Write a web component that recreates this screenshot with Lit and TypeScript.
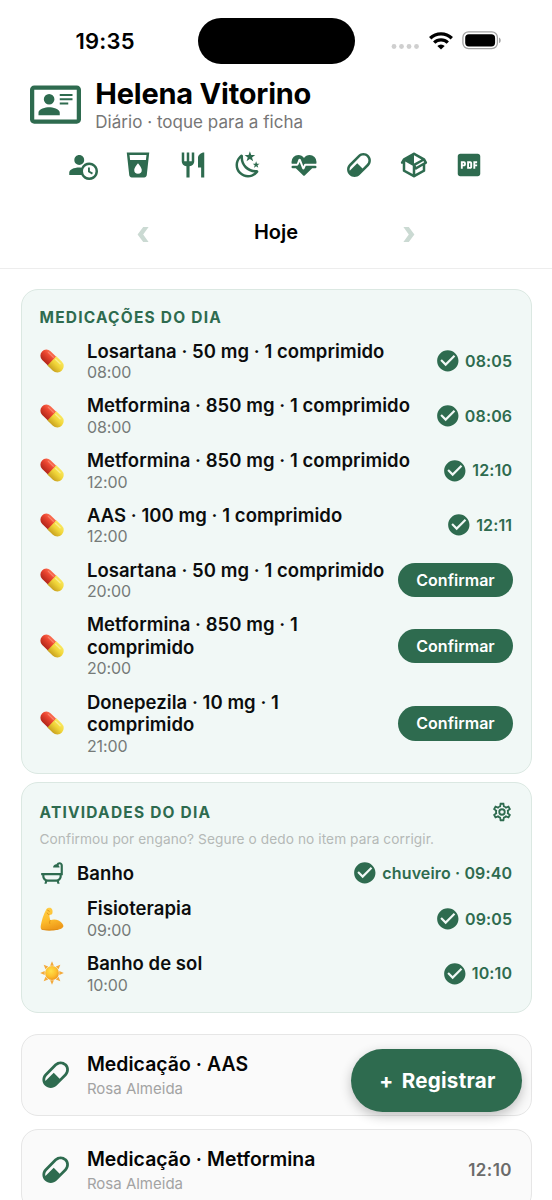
import { LitElement, html, svg, css, TemplateResult } from "lit";
import { customElement, property } from "lit/decorators.js";

const ICONS: Record<string, string> = {
  card: "M22,3H2C0.91,3.04 0.04,3.91 0,5V19C0.04,20.09 0.91,20.96 2,21H22C23.09,20.96 23.96,20.09 24,19V5C23.96,3.91 23.09,3.04 22,3M22,19H2V5H22V19M14,17V15.75C14,14.09 10.66,13.25 9,13.25C7.34,13.25 4,14.09 4,15.75V17H14M9,7A2.5,2.5 0 0,0 6.5,9.5A2.5,2.5 0 0,0 9,12A2.5,2.5 0 0,0 11.5,9.5A2.5,2.5 0 0,0 9,7M14,7V8H20V7H14M14,9V10H20V9H14M14,11V12H18V11H14",
  accountClock: "M10.63,14.1C12.23,10.58 16.38,9.03 19.9,10.63C23.42,12.23 24.97,16.38 23.37,19.9C22.24,22.4 19.75,24 17,24C14.3,24 11.83,22.44 10.67,20H1V18C1.06,16.86 1.84,15.93 3.34,15.18C4.84,14.43 6.72,14.04 9,14C9.57,14 10.11,14.05 10.63,14.1V14.1M9,4C10.12,4.03 11.06,4.42 11.81,5.17C12.56,5.92 12.93,6.86 12.93,8C12.93,9.14 12.56,10.08 11.81,10.83C11.06,11.58 10.12,11.95 9,11.95C7.88,11.95 6.94,11.58 6.19,10.83C5.44,10.08 5.07,9.14 5.07,8C5.07,6.86 5.44,5.92 6.19,5.17C6.94,4.42 7.88,4.03 9,4M17,22A5,5 0 0,0 22,17A5,5 0 0,0 17,12A5,5 0 0,0 12,17A5,5 0 0,0 17,22M16,14H17.5V16.82L19.94,18.23L19.19,19.53L16,17.69V14Z",
  cup: "M18.32,8H5.67L5.23,4H18.77M12,19A3,3 0 0,1 9,16C9,14 12,10.6 12,10.6C12,10.6 15,14 15,16A3,3 0 0,1 12,19M3,2L5,20.23C5.13,21.23 5.97,22 7,22H17C18,22 18.87,21.23 19,20.23L21,2H3Z",
  silverware: "M11,9H9V2H7V9H5V2H3V9C3,11.12 4.66,12.84 6.75,12.97V22H9.25V12.97C11.34,12.84 13,11.12 13,9V2H11V9M16,6V14H18.5V22H21V2C18.24,2 16,4.24 16,6Z",
  night: "M17.75,4.09L15.22,6.03L16.13,9.09L13.5,7.28L10.87,9.09L11.78,6.03L9.25,4.09L12.44,4L13.5,1L14.56,4L17.75,4.09M21.25,11L19.61,12.25L20.2,14.23L18.5,13.06L16.8,14.23L17.39,12.25L15.75,11L17.81,10.95L18.5,9L19.19,10.95L21.25,11M18.97,15.95C19.8,15.87 20.69,17.05 20.16,17.8C19.84,18.25 19.5,18.67 19.08,19.07C15.17,23 8.84,23 4.94,19.07C1.03,15.17 1.03,8.83 4.94,4.93C5.34,4.53 5.76,4.17 6.21,3.85C6.96,3.32 8.14,4.21 8.06,5.04C7.79,7.9 8.75,10.87 10.95,13.06C13.14,15.26 16.1,16.22 18.97,15.95M17.33,17.97C14.5,17.81 11.7,16.64 9.53,14.5C7.36,12.31 6.2,9.5 6.04,6.68C3.23,9.82 3.34,14.64 6.35,17.66C9.37,20.67 14.19,20.78 17.33,17.97Z",
  heart: "M7.5,4A5.5,5.5 0 0,0 2,9.5C2,10 2.09,10.5 2.22,11H6.3L7.57,7.63C7.87,6.83 9.05,6.75 9.43,7.63L11.5,13L12.09,11.58C12.22,11.25 12.57,11 13,11H21.78C21.91,10.5 22,10 22,9.5A5.5,5.5 0 0,0 16.5,4C14.64,4 13,4.93 12,6.34C11,4.93 9.36,4 7.5,4M3,12.5A1,1 0 0,0 2,13.5A1,1 0 0,0 3,14.5H5.44L11,20C12,20.9 12,20.9 13,20L18.56,14.5H21A1,1 0 0,0 22,13.5A1,1 0 0,0 21,12.5H13.4L12.47,14.8C12.07,15.81 10.92,15.67 10.55,14.83L8.5,9.5L7.54,11.83C7.39,12.21 7.05,12.5 6.6,12.5H3Z",
  pill: "M4.22,11.29L11.29,4.22C13.64,1.88 17.43,1.88 19.78,4.22C22.12,6.56 22.12,10.36 19.78,12.71L12.71,19.78C10.36,22.12 6.56,22.12 4.22,19.78C1.88,17.43 1.88,13.64 4.22,11.29M5.64,12.71C4.59,13.75 4.24,15.24 4.6,16.57L10.59,10.59L14.83,14.83L18.36,11.29C19.93,9.73 19.93,7.2 18.36,5.64C16.8,4.07 14.27,4.07 12.71,5.64L5.64,12.71Z",
  package: "M2,10.96C1.5,10.68 1.35,10.07 1.63,9.59L3.13,7C3.24,6.8 3.41,6.66 3.6,6.58L11.43,2.18C11.59,2.06 11.79,2 12,2C12.21,2 12.41,2.06 12.57,2.18L20.47,6.62C20.66,6.72 20.82,6.88 20.91,7.08L22.36,9.6C22.64,10.08 22.47,10.69 22,10.96L21,11.54V16.5C21,16.88 20.79,17.21 20.47,17.38L12.57,21.82C12.41,21.94 12.21,22 12,22C11.79,22 11.59,21.94 11.43,21.82L3.53,17.38C3.21,17.21 3,16.88 3,16.5V10.96C2.7,11.13 2.32,11.14 2,10.96M12,4.15V10.85L17.96,7.5L12,4.15M5,15.91L11,19.29V12.58L5,9.21V15.91M19,15.91V12.69L14,15.59C13.67,15.77 13.3,15.76 13,15.6V19.29L19,15.91M13.85,13.36L20.13,9.73L19.55,8.72L13.27,12.35L13.85,13.36Z",
  pdf: "M19 3H5C3.9 3 3 3.9 3 5V19C3 20.1 3.9 21 5 21H19C20.1 21 21 20.1 21 19V5C21 3.9 20.1 3 19 3M9.5 11.5C9.5 12.3 8.8 13 8 13H7V15H5.5V9H8C8.8 9 9.5 9.7 9.5 10.5V11.5M14.5 13.5C14.5 14.3 13.8 15 13 15H10.5V9H13C13.8 9 14.5 9.7 14.5 10.5V13.5M18.5 10.5H17V11.5H18.5V13H17V15H15.5V9H18.5V10.5M12 10.5H13V13.5H12V10.5M7 10.5H8V11.5H7V10.5Z",
  check: "M12 2C6.5 2 2 6.5 2 12S6.5 22 12 22 22 17.5 22 12 17.5 2 12 2M10 17L5 12L6.41 10.59L10 14.17L17.59 6.58L19 8L10 17Z",
  cog: "M12,8A4,4 0 0,1 16,12A4,4 0 0,1 12,16A4,4 0 0,1 8,12A4,4 0 0,1 12,8M12,10A2,2 0 0,0 10,12A2,2 0 0,0 12,14A2,2 0 0,0 14,12A2,2 0 0,0 12,10M10,22C9.75,22 9.54,21.82 9.5,21.58L9.13,18.93C8.5,18.68 7.96,18.34 7.44,17.94L4.95,18.95C4.73,19.03 4.46,18.95 4.34,18.73L2.34,15.27C2.21,15.05 2.27,14.78 2.46,14.63L4.57,12.97L4.5,12L4.57,11L2.46,9.37C2.27,9.22 2.21,8.95 2.34,8.73L4.34,5.27C4.46,5.05 4.73,4.96 4.95,5.05L7.44,6.05C7.96,5.66 8.5,5.32 9.13,5.07L9.5,2.42C9.54,2.18 9.75,2 10,2H14C14.25,2 14.46,2.18 14.5,2.42L14.87,5.07C15.5,5.32 16.04,5.66 16.56,6.05L19.05,5.05C19.27,4.96 19.54,5.05 19.66,5.27L21.66,8.73C21.79,8.95 21.73,9.22 21.54,9.37L19.43,11L19.5,12L19.43,13L21.54,14.63C21.73,14.78 21.79,15.05 21.66,15.27L19.66,18.73C19.54,18.95 19.27,19.04 19.05,18.95L16.56,17.95C16.04,18.34 15.5,18.68 14.87,18.93L14.5,21.58C14.46,21.82 14.25,22 14,22H10M11.25,4L10.88,6.61C9.68,6.86 8.62,7.5 7.85,8.39L5.44,7.35L4.69,8.65L6.8,10.2C6.4,11.37 6.4,12.64 6.8,13.8L4.68,15.36L5.43,16.66L7.86,15.62C8.63,16.5 9.68,17.14 10.87,17.38L11.24,20H12.76L13.13,17.39C14.32,17.14 15.37,16.5 16.14,15.62L18.57,16.66L19.32,15.36L17.2,13.81C17.6,12.64 17.6,11.37 17.2,10.2L19.31,8.65L18.56,7.35L16.15,8.39C15.38,7.5 14.32,6.86 13.12,6.62L12.75,4H11.25Z",
  bath: "M21 14V15C21 16.91 19.93 18.57 18.35 19.41L19 22H17L16.5 20H7.5L7 22H5L5.65 19.41C4.07 18.57 3 16.91 3 15V14H2V12H20V5C20 4.45 19.55 4 19 4C18.5 4 18.12 4.34 18 4.79C18.63 5.33 19 6.13 19 7H13C13 5.34 14.34 4 16 4H16.17C16.58 2.84 17.69 2 19 2C20.66 2 22 3.34 22 5V14H21M19 14H5V15C5 16.66 6.34 18 8 18H16C17.66 18 19 16.66 19 15V14Z",
};

@customElement("glyph-icon")
class GlyphIcon extends LitElement {
  @property() name = "";
  static styles = css`
    :host { display: block; flex: none; color: #2e6b4f; }
    svg { display: block; width: 100%; height: 100%; fill: currentColor; }
  `;
  render() {
    return html`<svg viewBox="0 0 24 24"><path fill-rule="evenodd" d=${ICONS[this.name]}></path></svg>`;
  }
}

const EMOJI: Record<string, TemplateResult> = {
  capsule: svg`
    <defs>
      <linearGradient id="r" x1="0" y1="0" x2="0" y2="1"><stop offset="0" stop-color="#fb6f52"/><stop offset=".4" stop-color="#ea4530"/><stop offset="1" stop-color="#b3261a"/></linearGradient>
      <linearGradient id="y" x1="0" y1="0" x2="0" y2="1"><stop offset="0" stop-color="#f9e75e"/><stop offset=".45" stop-color="#f1d63a"/><stop offset="1" stop-color="#c9a11f"/></linearGradient>
    </defs>
    <g transform="rotate(44 12 12)">
      <path d="M12.500 6H4.200A6 6 0 0 0 4.200 18H12.500Z" fill="url(#r)"/>
      <path d="M11.800 5.600H19.400A6.400 6.400 0 0 1 19.400 18.400H11.800Z" fill="url(#y)"/>
      <path d="M3.400 8.400H10.400" stroke="#ff9c86" stroke-width="1.200" stroke-linecap="round" opacity=".6"/>
      <path d="M13.600 8.400H19.800" stroke="#fffbc4" stroke-width="1.300" stroke-linecap="round" opacity=".55"/>
    </g>`,
  arm: svg`
    <defs><linearGradient id="a" x1="0" y1="0" x2=".3" y2="1"><stop offset="0" stop-color="#ffd04a"/><stop offset=".6" stop-color="#fdbc2c"/><stop offset="1" stop-color="#ee9a1a"/></linearGradient></defs>
    <path d="M6.300 2.200C7.600 .9 10 .4 11.200 1.300C12.600 2.300 12.900 4.600 12.300 6.400C11.800 7.700 10.300 8 9.200 7.700C9.500 9.500 9.700 11.500 10.300 13.300C12.300 12.200 16 12 18.600 13.500C21.500 15.200 23.400 17.300 23.400 19C23.300 21 20.500 22.300 17.500 22.800C12.500 23.600 5 23.700 2 22.600C.6 22 .5 20.500 .8 18.600C1.500 14 3.300 7.500 6.300 2.200Z" fill="url(#a)"/>
    <path d="M10.300 13.300C9.600 14.300 9.400 15.300 9.700 16.400M9.200 7.700C8.200 7.400 7.500 6.800 7.200 6M7.600 3.200L9.300 4.200M2 22.400C7 23.500 13 23.200 18 22.300" fill="none" stroke="#d9860f" stroke-width=".8" stroke-linecap="round"/>`,
  sun: svg`
    <defs><radialGradient id="s" cx=".42" cy=".36" r=".65"><stop offset="0" stop-color="#ffe14a"/><stop offset=".6" stop-color="#fdc02e"/><stop offset="1" stop-color="#f29a1c"/></radialGradient></defs>
    ${[0, 45, 90, 135, 180, 225, 270, 315].map((d) => svg`<path d="M12 .2L13.900 4.700H10.100Z" fill="#f4a93a" transform="rotate(${d} 12 12)"/>`)}
    <circle cx="12" cy="12" r="6.900" fill="url(#s)"/>`,
};

@customElement("emoji-icon")
class EmojiIcon extends LitElement {
  @property() name = "";
  static styles = css`
    :host { display: block; flex: none; width: 24px; height: 24px; }
    svg { display: block; width: 100%; height: 100%; overflow: visible; }
  `;
  render() {
    return html`<svg viewBox="0 0 24 24">${EMOJI[this.name]}</svg>`;
  }
}

interface Item { emoji: string; name: string; time: string; done?: string }

const MEDS: Item[] = [
  { emoji: "capsule", name: "Losartana · 50 mg · 1 comprimido", time: "08:00", done: "08:05" },
  { emoji: "capsule", name: "Metformina · 850 mg · 1 comprimido", time: "08:00", done: "08:06" },
  { emoji: "capsule", name: "Metformina · 850 mg · 1 comprimido", time: "12:00", done: "12:10" },
  { emoji: "capsule", name: "AAS · 100 mg · 1 comprimido", time: "12:00", done: "12:11" },
  { emoji: "capsule", name: "Losartana · 50 mg · 1 comprimido", time: "20:00" },
  { emoji: "capsule", name: "Metformina · 850 mg · 1 comprimido", time: "20:00" },
  { emoji: "capsule", name: "Donepezila · 10 mg · 1 comprimido", time: "21:00" },
];
const ACTIVITIES: Item[] = [
  { emoji: "arm", name: "Fisioterapia", time: "09:00", done: "09:05" },
  { emoji: "sun", name: "Banho de sol", time: "10:00", done: "10:10" },
];
const TOOLS = ["accountClock", "cup", "silverware", "night", "heart", "pill", "package", "pdf"];

@customElement("app-root")
class AppRoot extends LitElement {
  static styles = css`
    :host { display: block; position: relative; height: 1200px; overflow: hidden; background: #fff; color: #0c0d0d; font-family: Inter, "Noto Sans", sans-serif; }
    * { box-sizing: border-box; }
    .status { display: grid; grid-template-columns: 197.500px 157.500px 1fr; height: 76px; padding-top: 17.500px; }
    .clock { padding-left: 75.500px; font-size: 22px; font-weight: 600; line-height: 47px; letter-spacing: .2px; color: #000; }
    .island { height: 46.500px; border-radius: 24px; background: #000; }
    .sys { display: flex; height: 46.500px; align-items: center; padding-left: 36px; }
    .sys svg { display: block; }
    .dots { margin-top: 12px; margin-right: 10px; }
    .wifi { margin-right: 9px; }

    .person { display: flex; align-items: center; gap: 14.300px; padding-left: 30px; }
    .person glyph-icon { width: 51px; height: 51px; }
    .title { font-size: 29px; font-weight: 700; line-height: 35px; letter-spacing: -.22px; color: #000; }
    .subtitle { margin-top: 1px; font-size: 17px; line-height: 20px; letter-spacing: .03px; color: #767676; }
    .tools { display: flex; justify-content: center; gap: 25.100px; margin-top: 18px; }
    .tools glyph-icon { width: 30px; height: 30px; }
    .day { display: flex; justify-content: space-between; align-items: center; width: 277.500px; height: 30px; margin: 37px auto 0; font-size: 20px; font-weight: 600; color: #000; }
    .day svg { display: block; margin-top: 4px; fill: #cbdad3; }
    .rule { margin-top: 20.500px; height: 1px; background: #ededed; }

    .cards { padding: 20.500px 20.500px 0; }
    .card { border: 1px solid #dbe8e2; border-radius: 17px; background: #f1f8f6; padding: 17.400px 17.500px 11px 18px; }
    .card + .card { margin-top: 8.500px; }
    .head { display: flex; justify-content: space-between; align-items: center; height: 20px; margin-bottom: 6.200px; font-size: 15.500px; font-weight: 700; letter-spacing: 1.210px; color: #2e6b4f; }
    .activities .head { margin-bottom: 8px; }
    .activities { padding-top: 18.800px; }
    .gear { width: 22px; height: 22px; }
    .hint { font-size: 13.700px; line-height: 18px; letter-spacing: .07px; color: #b5b9b7; margin-bottom: 6.200px; white-space: nowrap; }
    .row { display: flex; align-items: center; padding: 6.125px 0; }
    .body { flex: 1; min-width: 0; margin: 0 11px 0 23.400px; }
    .name { font-size: 18.500px; font-weight: 600; line-height: 22.500px; letter-spacing: .05px; }
    .time { font-size: 16px; line-height: 20px; color: #767b79; letter-spacing: -.1px; }
    .bath { height: 37px; padding: 0; }
    .bath glyph-icon { width: 26px; height: 26px; margin-left: -1px; }
    .bath .body { margin-left: 12.600px; }
    .done { display: flex; align-items: center; gap: 4.500px; font-size: 16px; font-weight: 600; color: #2e6b4f; letter-spacing: .14px; padding-right: .8px; }
    .done glyph-icon { width: 25.600px; height: 25.600px; }
    .confirm { width: 115px; height: 34.700px; border: 0; border-radius: 18px; padding: 0; background: #2e6b4f; color: #fff; font: 600 16px/34.700px Inter, sans-serif; letter-spacing: .02px; }

    .feed { display: flex; flex-direction: column; gap: 13px; padding: 21px 20.500px 0; }
    .entry { display: flex; align-items: center; height: 82px; padding: 0 18.500px 0 17.500px; border: 1px solid #e6e6e6; border-radius: 17px; background: #fafafa; }
    .entry glyph-icon { width: 33.400px; height: 33.400px; }
    .entry .body { margin-left: 14.500px; }
    .entry .name { font-size: 19.400px; line-height: 25px; letter-spacing: .05px; color: #050505; }
    .who { margin-top: 1.400px; font-size: 15px; line-height: 19px; color: #a3a3a3; }
    .at { font-size: 17px; font-weight: 600; letter-spacing: .45px; color: #6b6b6b; }
    .fab { position: absolute; left: 351px; top: 1048.500px; width: 171px; height: 63.500px; border: 0; border-radius: 32px; background: #2e6b4f; color: #fff; font: 700 20.600px/63px Inter, sans-serif; letter-spacing: .25px; word-spacing: 3px; padding: 0 0 0 2px; box-shadow: 0 4px 12px rgba(0, 0, 0, .24); }
  `;

  private done(text: string) {
    return html`<div class="done"><glyph-icon name="check"></glyph-icon><span>${text}</span></div>`;
  }

  private row(i: Item) {
    return html`<div class="row">
      <emoji-icon name=${i.emoji}></emoji-icon>
      <div class="body"><div class="name">${i.name}</div><div class="time">${i.time}</div></div>
      ${i.done ? this.done(i.done) : html`<button class="confirm">Confirmar</button>`}
    </div>`;
  }

  private entry(name: string, at: string) {
    return html`<div class="entry">
      <glyph-icon name="pill"></glyph-icon>
      <div class="body"><div class="name">${name}</div><div class="who">Rosa Almeida</div></div>
      <span class="at">${at}</span>
    </div>`;
  }

  render() {
    return html`
      <div class="status">
        <div class="clock">19:35</div>
        <div class="island"></div>
        <div class="sys">
          <svg class="dots" width="28" height="6" viewBox="0 0 28 6" fill="#cfcfcf">
            <circle cx="3" cy="2.500" r="2.400"/><circle cx="10.500" cy="2.500" r="2.400"/><circle cx="18" cy="2.500" r="2.400"/><circle cx="25.500" cy="2.500" r="2.400"/>
          </svg>
          <svg class="wifi" width="24" height="18" viewBox="0 0 24 18" fill="none" stroke="#000" stroke-width="3.300">
            <path d="M1.200 6.300A15.400 15.400 0 0 1 22.800 6.300"/>
            <path d="M5.200 10.600A9.700 9.700 0 0 1 18.800 10.600"/>
            <path d="M12 17.500L8.300 14A5.200 5.200 0 0 1 15.700 14Z" fill="#000" stroke="none"/>
          </svg>
          <svg width="40" height="19" viewBox="0 0 40 19">
            <rect x=".9" y=".9" width="34.500" height="16.800" rx="5.600" fill="none" stroke="#a2a2a2" stroke-width="1.300"/>
            <rect x="3.200" y="3.200" width="29.900" height="12.200" rx="3.700" fill="#000"/>
            <path d="M37 6.500C39.300 7.400 39.300 11.200 37 12.100Z" fill="#a2a2a2"/>
          </svg>
        </div>
      </div>
      <div class="person">
        <glyph-icon name="card"></glyph-icon>
        <div><div class="title">Helena Vitorino</div><div class="subtitle">Diário · toque para a ficha</div></div>
      </div>
      <div class="tools">${TOOLS.map((t) => html`<glyph-icon name=${t}></glyph-icon>`)}</div>
      <div class="day">
        <svg width="12" height="15" viewBox="0 0 12 15"><path d="M6.200 0H11.600L6.200 7.500L11.600 15H6.200L.6 7.500Z"/></svg>
        <span>Hoje</span>
        <svg width="12" height="15" viewBox="0 0 12 15"><path d="M5.800 0H.4L5.800 7.500L.4 15H5.800L11.400 7.500Z"/></svg>
      </div>
      <div class="rule"></div>
      <div class="cards">
        <section class="card">
          <div class="head">MEDICAÇÕES DO DIA</div>
          ${MEDS.map((m) => this.row(m))}
        </section>
        <section class="card activities">
          <div class="head"><span>ATIVIDADES DO DIA</span><glyph-icon class="gear" name="cog"></glyph-icon></div>
          <div class="hint">Confirmou por engano? Segure o dedo no item para corrigir.</div>
          <div class="row bath">
            <glyph-icon name="bath"></glyph-icon>
            <div class="body"><div class="name">Banho</div></div>
            ${this.done("chuveiro · 09:40")}
          </div>
          ${ACTIVITIES.map((a) => this.row(a))}
        </section>
      </div>
      <div class="feed">
        ${this.entry("Medicação · AAS", "")}
        ${this.entry("Medicação · Metformina", "12:10")}
      </div>
      <button class="fab">+ Registrar</button>
    `;
  }
}
